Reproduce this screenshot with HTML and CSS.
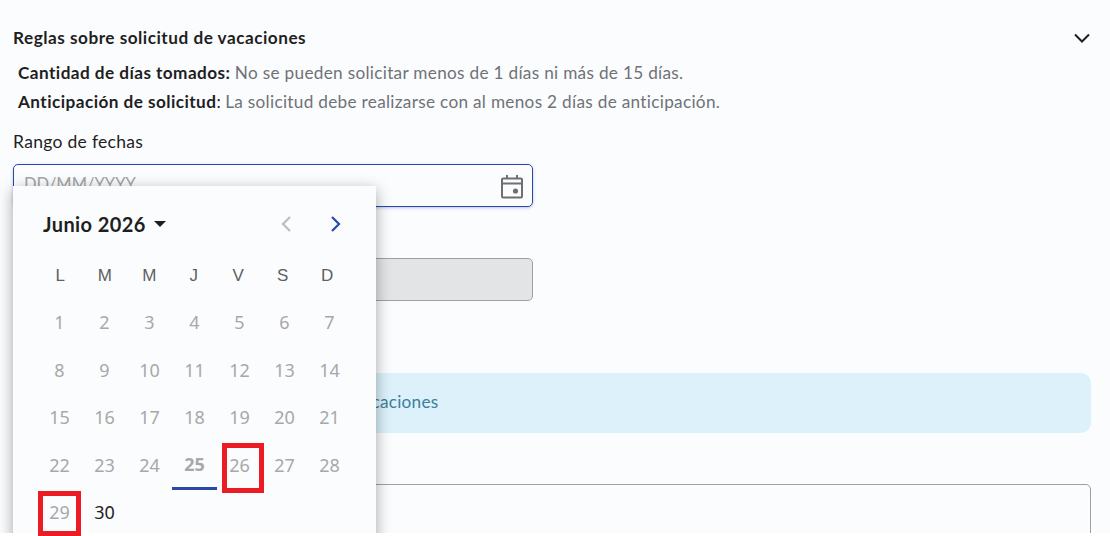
FILE: index.html

```html
<!DOCTYPE html>
<html lang="es">
<head>
  <meta charset="UTF-8">
  <title>Solicitud de vacaciones</title>
  <link rel="stylesheet" href="styles.css">
</head>
<body>
  <div class="page">
    <div class="rules-head">
      <span>Reglas sobre solicitud de vacaciones</span>
      <svg width="18" height="12" viewBox="0 0 18 12"><path d="M2 2.5 L9 9.5 L16 2.5" fill="none" stroke="#1f1f1f" stroke-width="2"/></svg>
    </div>
    <p class="rule"><b>Cantidad de días tomados:</b> <span>No se pueden solicitar menos de 1 días ni más de 15 días.</span></p>
    <p class="rule"><b>Anticipación de solicitud</b>: <span>La solicitud debe realizarse con al menos 2 días de anticipación.</span></p>

    <div class="field">
      <label class="field-label">Rango de fechas</label>
      <div class="date-input">
        <span class="placeholder">DD/MM/YYYY</span>
        <svg width="24" height="26" viewBox="0 0 24 26"><path d="M2 6.5 a1 1 0 0 1 1 -1 h18 a1 1 0 0 1 1 1 v17 a1 1 0 0 1 -1 1 h-18 a1 1 0 0 1 -1 -1 z M2 10.5 h20 M7 2 v3.5 M17 2 v3.5" fill="none" stroke="#6f6f6f" stroke-width="2"/><circle cx="15.5" cy="18" r="2.6" fill="#6f6f6f"/></svg>
      </div>
      <div class="disabled-input"></div>
    </div>

    <div class="info">Revisa tus días disponibles antes de pedir vacaciones</div>
    <div class="textarea"></div>

    <div class="calendar">
      <div class="cal-head">
        <span class="cal-title">Junio 2026</span>
        <span class="cal-caret"></span>
        <svg class="cal-prev" width="12" height="18" viewBox="0 0 12 18"><path d="M10 2 L3 9 L10 16" fill="none" stroke="#bdbdbd" stroke-width="2.2"/></svg>
        <svg class="cal-next" width="12" height="18" viewBox="0 0 12 18"><path d="M2 2 L9 9 L2 16" fill="none" stroke="#2b47a8" stroke-width="2.2"/></svg>
      </div>
      <div class="cal-grid cal-week">
        <span>L</span><span>M</span><span>M</span><span>J</span><span>V</span><span>S</span><span>D</span>
      </div>
      <div class="cal-grid cal-days">
        <span>1</span><span>2</span><span>3</span><span>4</span><span>5</span><span>6</span><span>7</span>
        <span>8</span><span>9</span><span>10</span><span>11</span><span>12</span><span>13</span><span>14</span>
        <span>15</span><span>16</span><span>17</span><span>18</span><span>19</span><span>20</span><span>21</span>
        <span>22</span><span>23</span><span>24</span><span class="today">25</span><span>26</span><span>27</span><span>28</span>
        <span>29</span><span class="active">30</span>
      </div>
    </div>
  </div>

  <div class="mark mark-26"></div>
  <div class="mark mark-29"></div>
</body>
</html>
```

FILE: styles.css

```css
html, body {
  margin: 0;
  height: 100%;
  background: #ffffff;
}
body {
  position: relative;
  font-family: Lato, sans-serif;
  color: #1f1f1f;
  overflow: hidden;
}
.page {
  position: relative;
  height: 533px;
  overflow: hidden;
  background: #fbfcfe;
  padding: 26px 19px 0 13px;
  box-sizing: border-box;
}
.rules-head {
  display: flex;
  justify-content: space-between;
  align-items: center;
  font-size: 17.2px;
  font-weight: 700;
  letter-spacing: 0.5px;
  line-height: 24px;
}
.rule {
  margin: 0;
  padding-left: 5px;
  font-size: 17.2px;
  line-height: 29px;
}
.rule:first-of-type {
  margin-top: 8px;
}
.rule b {
  font-weight: 700;
  letter-spacing: 0.44px;
}
.rule span {
  color: #6f7276;
  letter-spacing: 0.3px;
}
.field {
  margin-top: 14px;
}
.field-label {
  display: block;
  font-size: 17.5px;
  letter-spacing: 0.3px;
  line-height: 24px;
}
.date-input {
  display: flex;
  align-items: center;
  justify-content: space-between;
  width: 520px;
  height: 43px;
  margin-top: 10px;
  padding: 0 8px 0 10px;
  box-sizing: border-box;
  border: 1px solid #2b47a8;
  border-radius: 5px;
  box-shadow: 0 1px 3px rgba(43, 71, 168, 0.3);
}
.placeholder {
  color: #a3a3a3;
  font-size: 16.5px;
  margin-top: -3px;
}
.disabled-input {
  width: 520px;
  height: 43px;
  margin-top: 51px;
  box-sizing: border-box;
  border: 1px solid #a0a0a0;
  border-radius: 5px;
  background: #e3e4e6;
}
.info {
  height: 60px;
  margin-top: 72px;
  padding-left: 16px;
  border-radius: 10px;
  background: #dcf1fa;
  color: #3a7f9c;
  font-size: 17.2px;
  letter-spacing: 0.26px;
  line-height: 58px;
}
.textarea {
  height: 80px;
  margin-top: 51px;
  box-sizing: border-box;
  border: 1px solid #a0a0a0;
  border-radius: 5px;
}
.calendar {
  position: absolute;
  left: 13px;
  top: 186px;
  width: 363px;
  height: 380px;
  background: #fbfcfe;
  box-shadow: 0 4px 14px rgba(0, 0, 0, 0.35);
}
.cal-head {
  display: flex;
  align-items: center;
  height: 26px;
  margin-top: 25px;
  padding-left: 30px;
}
.cal-title {
  font-size: 20px;
  font-weight: 700;
  letter-spacing: 0.4px;
}
.cal-caret {
  width: 0;
  height: 0;
  margin-left: 8px;
  border-left: 6px solid transparent;
  border-right: 6px solid transparent;
  border-top: 6px solid #1f1f1f;
}
.cal-prev {
  margin-left: auto;
}
.cal-next {
  margin-left: 38px;
  margin-right: 34px;
}
.cal-grid {
  display: grid;
  grid-template-columns: repeat(7, 45px);
  padding-left: 24px;
  text-align: center;
}
.cal-week {
  grid-template-columns: repeat(7, 44.5px);
  margin-top: 26px;
  padding-left: 25px;
  font-family: "Liberation Sans", sans-serif;
  font-size: 17px;
  line-height: 26px;
  color: #5f5f5f;
}
.cal-days {
  margin-top: 10px;
  grid-auto-rows: 47.5px;
  font-family: "Noto Sans", sans-serif;
  font-size: 18px;
  line-height: 47px;
  color: #a8a8a8;
}
.cal-days .today {
  font-weight: 700;
  border-bottom: 3px solid #2b47a8;
  height: 45px;
  line-height: 45px;
}
.cal-days .active {
  color: #1f1f1f;
}
.mark {
  position: absolute;
  border: 5px solid #ec1c24;
  box-sizing: border-box;
}
.mark-26 {
  left: 222px;
  top: 443px;
  width: 42px;
  height: 50px;
}
.mark-29 {
  left: 38px;
  top: 491px;
  width: 43px;
  height: 45px;
}
```
